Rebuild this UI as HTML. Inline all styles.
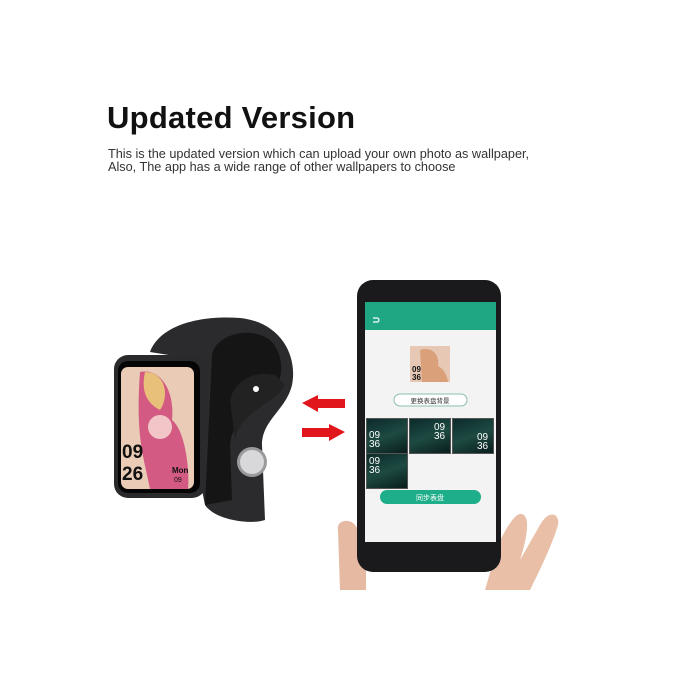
<!DOCTYPE html>
<html><head><meta charset="utf-8"><style>
body{margin:0;width:680px;height:680px;background:#fff;position:relative;overflow:hidden;font-family:"Liberation Sans","Noto Sans CJK SC",sans-serif}
.a{position:absolute}
h1{position:absolute;left:107px;top:100px;margin:0;font-size:31px;font-weight:bold;color:#111;letter-spacing:0.25px}
.sub{left:108px;top:148px;font-size:12.7px;line-height:13px;color:#333;white-space:nowrap}
.th{position:absolute;background:linear-gradient(160deg,#0c2a2a,#1d4a42 50%,#0a1d1c);border:1px solid #555;color:#fff;font-size:10px;line-height:9px}
</style></head><body>
<h1>Updated Version</h1>
<div class="a sub">This is the updated version which can upload your own photo as wallpaper,<br>Also, The app has a wide range of other wallpapers to choose</div>

<svg class="a" style="left:0;top:0" width="680" height="680">
<path d="M150 352 C160 325 200 315 240 318 C280 322 298 355 292 385 C286 410 262 420 262 445 L265 520 C250 525 215 520 205 505 L200 480 L200 360 Z" fill="#2b2b2d"/>
<path d="M212 355 C215 335 250 325 270 340 C285 355 285 380 270 395 C250 415 232 420 230 445 L232 500 L205 505 Z" fill="#151516"/>
<path d="M230 400 C235 380 255 370 275 375 L285 385 C275 405 240 410 235 440 Z" fill="#222"/>
<circle cx="252" cy="462" r="15" fill="#9a9a9c"/><circle cx="252" cy="462" r="12" fill="#d8d8da"/>
<circle cx="256" cy="389" r="3" fill="#fff"/>
<rect x="114" y="355" width="92" height="143" rx="14" fill="#2a2a2c"/>
<rect x="118" y="361" width="82" height="132" rx="10" fill="#050505"/>
<rect x="121" y="367" width="73" height="122" rx="7" fill="#e9cbb6"/>
<path d="M140 372 C160 368 175 390 172 420 C185 430 190 470 188 489 L150 489 C145 460 135 440 140 372Z" fill="#d35a83"/>
<path d="M145 372 C165 372 170 395 160 410 C150 405 140 395 145 372Z" fill="#e8c07a"/>
<circle cx="160" cy="427" r="12" fill="#f2c6c8"/>
<text x="122" y="458" font-family="Liberation Sans" font-weight="bold" font-size="19" fill="#111">09</text>
<text x="122" y="480" font-family="Liberation Sans" font-weight="bold" font-size="19" fill="#111">26</text>
<text x="172" y="473" font-family="Liberation Sans" font-weight="bold" font-size="8" fill="#111">Mon</text>
<text x="174" y="482" font-family="Liberation Sans" font-size="7" fill="#111">09</text>
<path d="M302 403 L318 395 L318 399 L345 399 L345 408 L318 408 L318 412 Z" fill="#e0161c"/>
<path d="M345 432 L329 424 L329 428 L302 428 L302 437 L329 437 L329 441 Z" fill="#e0161c"/>
<path d="M338 530 C336 520 350 518 355 525 L366 540 L366 590 L340 590 Z" fill="#e6b9a2"/>
<path d="M498 545 C505 530 515 512 522 514 C530 516 528 535 520 560 L540 525 C548 510 560 512 558 525 C552 545 540 570 530 590 L485 590 Z" fill="#e9bfa7"/>
<rect x="357" y="280" width="144" height="292" rx="16" fill="#1a1a1c"/>
<rect x="365" y="302" width="131" height="240" fill="#f3f3f3"/>
<rect x="365" y="302" width="131" height="28" fill="#1fa784"/>
<path d="M373 322 l4 0 a2 2 0 0 0 0 -4 l-4 0" stroke="#fff" fill="none" stroke-width="1.2"/>
<rect x="410" y="346" width="40" height="36" fill="#e7c8b4"/>
<path d="M420 350 C432 346 440 355 438 366 C446 370 448 380 448 382 L422 382 Z" fill="#d9a07a"/>
<text x="412" y="372" font-family="Liberation Sans" font-weight="bold" font-size="8" fill="#111">09</text>
<text x="412" y="380" font-family="Liberation Sans" font-weight="bold" font-size="8" fill="#111">36</text>
<rect x="394" y="394" width="73" height="12" rx="6" fill="#fff" stroke="#8bbcae"/>
<text x="430" y="403" text-anchor="middle" font-family="Noto Sans CJK SC" font-size="6.5" fill="#333">更换表盘背景</text>
<rect x="380" y="490" width="101" height="14" rx="7" fill="#1fae8a"/>
<text x="430" y="500" text-anchor="middle" font-family="Noto Sans CJK SC" font-size="7" fill="#fff">同步表盘</text>
</svg>
<div class="th" style="left:366px;top:418px;width:40px;height:34px"><div style="margin:12px 0 0 2px">09<br>36</div></div>
<div class="th" style="left:409px;top:418px;width:40px;height:34px"><div style="margin:4px 0 0 24px">09<br>36</div></div>
<div class="th" style="left:452px;top:418px;width:40px;height:34px"><div style="margin:14px 0 0 24px">09<br>36</div></div>
<div class="th" style="left:366px;top:453px;width:40px;height:34px"><div style="margin:3px 0 0 2px">09<br>36</div></div>
</body></html>
